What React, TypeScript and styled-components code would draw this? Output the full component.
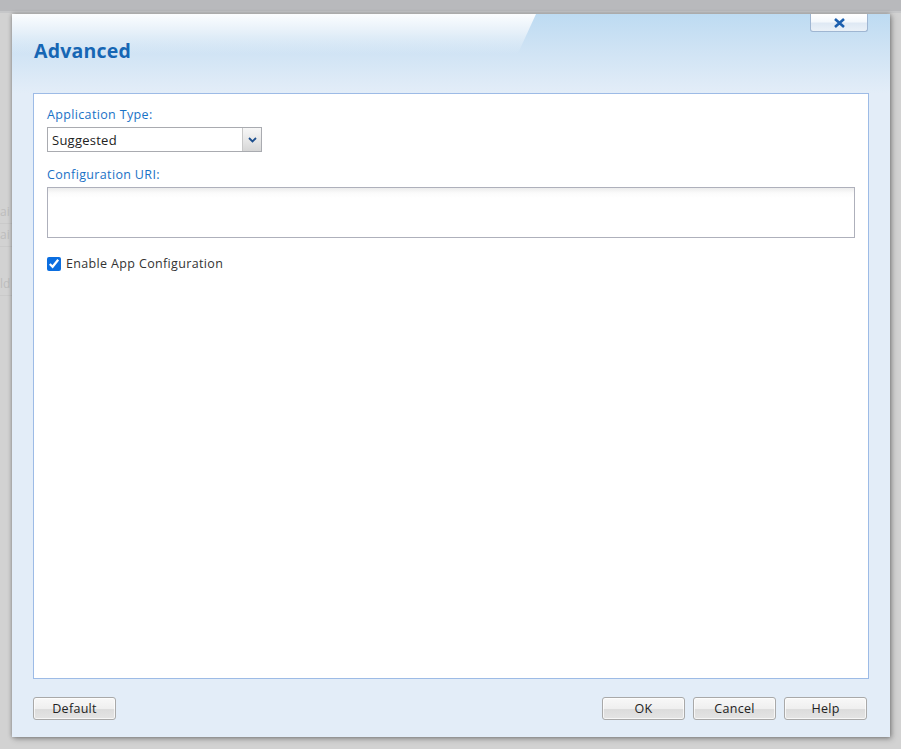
import React from "react";
import styled, { createGlobalStyle } from "styled-components";

const Global = createGlobalStyle`
  html, body { margin: 0; padding: 0; }
  body {
    width: 901px;
    height: 749px;
    overflow: hidden;
    background: #d3d3d3;
    font-family: "Open Sans", "Liberation Sans", Arial, sans-serif;
  }
`;

const Page = styled.div`
  position: relative;
  width: 901px;
  height: 749px;
  display: flex;
  flex-direction: column;
  background: #d2d2d2;
`;

const TopBar = styled.div`
  height: 11px;
  background: #b8b9bc;
  border-bottom: 2px solid #c6c7c9;
`;

const BackList = styled.div`
  display: flex;
  flex-direction: column;
  padding-top: 188px;
`;

const BackLabel = styled.div<{ $gap: number }>`
  font-size: 12px;
  color: #bdbdbd;
  height: 22px;
  line-height: 22px;
  margin-top: ${(p) => p.$gap}px;
  border-bottom: 1px solid #cacaca;
  width: 12px;
`;

const Dialog = styled.div`
  position: absolute;
  left: 12px;
  top: 14px;
  width: 878px;
  height: 723px;
  background: #e3edf8;
  box-shadow: 0 0 4px rgba(0, 0, 0, 0.35), 2px 2px 6px rgba(0, 0, 0, 0.25);
  display: flex;
  flex-direction: column;
`;

const Header = styled.div`
  position: relative;
  height: 79px;
  flex: none;
  padding-left: 22px;
  display: flex;
  align-items: center;
  background: linear-gradient(to bottom, #bddbf2 0%, #cde2f4 40%, #e3edf8 100%);
  overflow: hidden;
  &::before {
    content: "";
    position: absolute;
    left: 0;
    top: 0;
    width: 524px;
    height: 40px;
    clip-path: polygon(0 0, 100% 0, 96.5% 100%, 0 100%);
    background: linear-gradient(to bottom, #fbfdff 0%, #e6f0f9 45%, rgba(208, 227, 244, 0) 100%);
  }
`;

const Title = styled.h1`
  position: relative;
  margin: 0 0 6px 0;
  font-size: 19.5px;
  font-weight: 700;
  color: #1666b4;
  letter-spacing: 0.2px;
`;

const CloseButton = styled.button`
  position: absolute;
  top: 0;
  right: 22px;
  width: 58px;
  height: 18px;
  padding: 0;
  border: 1px solid #9fb6d2;
  border-top: none;
  border-radius: 0 0 3px 3px;
  background: linear-gradient(to bottom, #ffffff 0%, #f4f8fc 45%, #dfe9f4 55%, #eaf1f8 100%);
  display: flex;
  align-items: center;
  justify-content: center;
  cursor: pointer;
`;

const Body = styled.div`
  flex: 1;
  display: flex;
  flex-direction: column;
  padding: 0 21px 0 21px;
`;

const Panel = styled.div`
  height: 586px;
  background: #ffffff;
  border: 1px solid #9dbbe6;
  box-sizing: border-box;
  padding: 13px 13px 0 13px;
  display: flex;
  flex-direction: column;
`;

const FieldLabel = styled.label`
  font-size: 12.5px;
  color: #1a72c6;
  line-height: 16px;
  margin-bottom: 4px;
  letter-spacing: 0.35px;
`;

const Select = styled.div`
  width: 215px;
  height: 25px;
  box-sizing: border-box;
  border: 1px solid #a9abb0;
  display: flex;
  align-items: stretch;
  margin-bottom: 15px;
  background: #fff;
`;

const SelectValue = styled.div`
  flex: 1;
  font-size: 13px;
  color: #222;
  padding-left: 4px;
  display: flex;
  align-items: center;
  letter-spacing: 0.25px;
`;

const SelectArrow = styled.div`
  width: 18px;
  border-left: 1px solid #c8c8c8;
  background: linear-gradient(to bottom, #f7f7f7 0%, #e8e8e8 50%, #d6d6d6 100%);
  display: flex;
  align-items: center;
  justify-content: center;
`;

const TextArea = styled.div`
  width: 808px;
  height: 51px;
  box-sizing: border-box;
  border: 1px solid #aeb0bb;
  background: linear-gradient(to bottom, #ececec 0%, #fbfbfb 5px, #ffffff 10px);
  margin-bottom: 17px;
`;

const CheckRow = styled.label`
  display: flex;
  align-items: center;
  gap: 5px;
  font-size: 12.5px;
  color: #333;
  letter-spacing: 0.35px;
`;

const CheckBox = styled.input`
  margin: 0;
  width: 14px;
  height: 14px;
  accent-color: #0b6ee0;
`;

const Footer = styled.div`
  display: flex;
  align-items: center;
  padding: 18px 2px 0 0;
  gap: 8px;
`;

const Spacer = styled.div`
  flex: 1;
`;

const Button = styled.button`
  width: 83px;
  height: 23px;
  box-sizing: border-box;
  border: 1px solid #a9a9a9;
  border-radius: 3px;
  background: linear-gradient(to bottom, #f8f8f8 0%, #efefef 50%, #dcdcdc 55%, #e4e4e4 100%);
  font-family: "Open Sans", "Liberation Sans", Arial, sans-serif;
  font-size: 12.5px;
  color: #222;
  padding: 0;
  letter-spacing: 0.3px;
  box-shadow: inset 0 0 0 1px rgba(255, 255, 255, 0.7);
  cursor: pointer;
`;

export default function App() {
  return (
    <Page>
      <Global />
      <TopBar />
      <BackList>
        <BackLabel $gap={0}>ai</BackLabel>
        <BackLabel $gap={0}>ai</BackLabel>
        <BackLabel $gap={26}>ld</BackLabel>
      </BackList>
      <Dialog>
        <Header>
          <Title>Advanced</Title>
          <CloseButton aria-label="Close">
            <svg width="13" height="10" viewBox="0 0 13 10">
              <path d="M2 1 L11 9 M11 1 L2 9" stroke="#1b5fae" strokeWidth="2.6" strokeLinecap="butt" />
            </svg>
          </CloseButton>
        </Header>
        <Body>
          <Panel>
            <FieldLabel>Application Type:</FieldLabel>
            <Select>
              <SelectValue>Suggested</SelectValue>
              <SelectArrow>
                <svg width="9" height="6" viewBox="0 0 9 6">
                  <path d="M1 1 L4.5 4.5 L8 1" fill="none" stroke="#1d4f8e" strokeWidth="1.8" />
                </svg>
              </SelectArrow>
            </Select>
            <FieldLabel>Configuration URI:</FieldLabel>
            <TextArea />
            <CheckRow>
              <CheckBox type="checkbox" defaultChecked />
              Enable App Configuration
            </CheckRow>
          </Panel>
          <Footer>
            <Button>Default</Button>
            <Spacer />
            <Button>OK</Button>
            <Button>Cancel</Button>
            <Button>Help</Button>
          </Footer>
        </Body>
      </Dialog>
    </Page>
  );
}
